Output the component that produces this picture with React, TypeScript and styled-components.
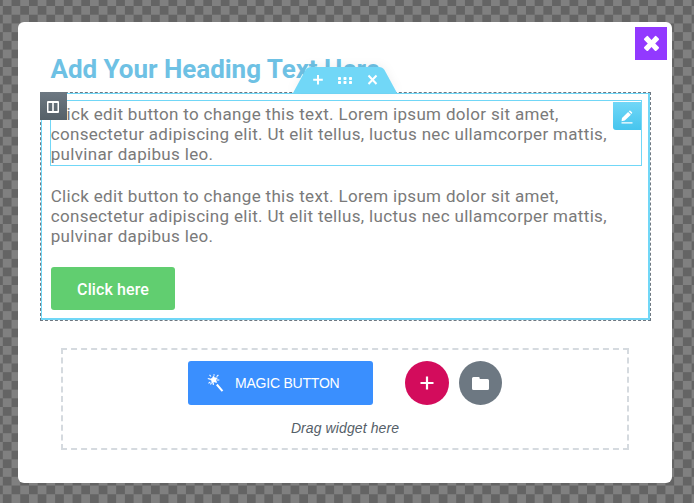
import React from "react";
import styled, { createGlobalStyle } from "styled-components";

const GlobalStyle = createGlobalStyle`
  *, *::before, *::after { box-sizing: border-box; }
  html, body { margin: 0; overflow: hidden; }
`;

const Backdrop = styled.main`
  width: 694px;
  height: 503px;
  padding: 22px 22px 20px 18px;
  background: repeating-conic-gradient(#808080 0 25%, #646464 0 50%) -5.92px -2.72px / 17.44px 17.44px;
  font-family: Roboto, "Liberation Sans", sans-serif;
`;

const Popup = styled.section`
  position: relative;
  height: 461px;
  padding: 29px 21px 0 22px;
  background: #fff;
  border-radius: 6px;
`;

const Heading = styled.h1`
  margin: 0 0 0 10.5px;
  height: 41px;
  color: #6ec1e4;
  font-size: 26px;
  font-weight: 700;
  line-height: 36px;
  letter-spacing: -0.03px;
  white-space: nowrap;
`;

const CloseButton = styled.button`
  position: absolute;
  top: 5px;
  right: 5px;
  display: grid;
  place-items: center;
  width: 32px;
  height: 33px;
  padding: 0;
  border: 0;
  background: #9239ff;
`;

const EditorSection = styled.div`
  position: relative;
  width: 611px;
  height: 229px;
  border: 1px dashed #6d7882;
`;

const Column = styled.div`
  height: 227px;
  padding: 6px 6px 0 8px;
  border: solid #71d7f7;
  border-width: 1px 2px 2px 1px;
`;

const TextWidget = styled.div<{ $active?: boolean }>`
  position: relative;
  width: 592px;
  height: 66px;
  padding-top: 3px;
  border: 1px solid ${(p) => (p.$active ? "#71d7f7" : "transparent")};
  margin-bottom: 16px;
`;

const Copy = styled.p`
  margin: 0 0 0 -0.3px;
  color: #7a7a7a;
  font-size: 17px;
  line-height: 20px;
  letter-spacing: 0.325px;
  white-space: nowrap;
`;

const EditHandle = styled.button`
  position: absolute;
  top: 1px;
  right: 0;
  display: grid;
  place-items: center;
  width: 28px;
  height: 28px;
  padding: 2px 0 0;
  border: 0;
  border-radius: 0 0 0 3px;
  background: linear-gradient(#71d7f7, #46c5ee);
`;

const ColumnHandle = styled.div`
  position: absolute;
  top: -1px;
  left: -1px;
  display: flex;
  align-items: center;
  width: 27px;
  height: 28px;
  padding: 1px 0 0 7px;
  background: linear-gradient(#6d7882, #556068);
`;

const SectionTab = styled.div`
  position: absolute;
  left: 252px;
  bottom: 227px;
  width: 104px;
  height: 26px;
  filter: drop-shadow(0 -2px 4px rgba(0, 0, 0, 0.05));
  svg { display: block; }
`;

const ActionButton = styled.button`
  display: block;
  width: 124px;
  height: 43px;
  margin: 19px 0 0 1px;
  padding: 2px 0 0;
  border: 0;
  border-radius: 3px;
  background: #61ce70;
  color: #fff;
  font: 500 16px/41px Roboto, sans-serif;
  letter-spacing: 0.1px;
`;

const DropArea = styled.div`
  display: flex;
  flex-direction: column;
  align-items: center;
  width: 568px;
  height: 102px;
  margin: 27px 0 0 21px;
  padding-top: 11px;
  border: 2px dashed #d5dadf;
`;

const DropActions = styled.div`
  display: flex;
  align-items: center;
  height: 44px;
`;

const MagicButton = styled.button`
  display: flex;
  align-items: center;
  gap: 10px;
  width: 185px;
  height: 44px;
  margin-right: 32px;
  padding: 0 0 0 19px;
  border: 0;
  border-radius: 3px;
  background: #3a8ffe;
  color: #fff;
  font: 14px "Liberation Sans", sans-serif;
  letter-spacing: -0.22px;
  white-space: nowrap;
`;

const RoundButton = styled.button<{ $tone: string; $width?: number; $gap?: number }>`
  display: grid;
  place-items: center;
  width: ${(p) => p.$width ?? 44}px;
  height: 44px;
  margin-left: ${(p) => p.$gap ?? 0}px;
  padding: 0;
  border: 0;
  border-radius: 50%;
  background: ${(p) => p.$tone};
`;

const Hint = styled.p`
  margin: 14px 0 0;
  color: #556068;
  font: italic 14px/18px "Liberation Sans", sans-serif;
  letter-spacing: 0.1px;
`;

const LOREM = [
  "Click edit button to change this text. Lorem ipsum dolor sit amet,",
  "consectetur adipiscing elit. Ut elit tellus, luctus nec ullamcorper mattis,",
  "pulvinar dapibus leo.",
];

const Paragraph = () => (
  <Copy>
    {LOREM.map((line, i) => (
      <React.Fragment key={line}>
        {i > 0 && <br />}
        {line}
      </React.Fragment>
    ))}
  </Copy>
);

const CloseIcon = () => (
  <svg width="17" height="17" viewBox="0 0 16 16">
    <path
      d="M8 4.600L11.200 1.100q.7-.7 1.400 0l2.200 2.200q.7.7 0 1.400L11.500 8l3.300 3.200q.7.7 0 1.400l-2.200 2.200q-.7.7-1.400 0L8 11.400l-3.200 3.400q-.7.7-1.400 0l-2.200-2.200q-.7-.7 0-1.400L4.500 8 1.200 4.700q-.7-.7 0-1.400l2.200-2.200q.7-.7 1.400 0z"
      fill="#fff"
    />
  </svg>
);

const ColumnIcon = () => (
  <svg width="12" height="12" viewBox="0 0 12 12" fill="#fff" fillRule="evenodd">
    <path d="M1 0h10a1 1 0 0 1 1 1v10a1 1 0 0 1-1 1H1a1 1 0 0 1-1-1V1a1 1 0 0 1 1-1zM1.500 2v8h3.700V2zM6.800 2v8h3.700V2z" />
  </svg>
);

const PencilIcon = () => (
  <svg width="12" height="14" viewBox="0 0 12 14" fill="#fff">
    <path d="M1 8L7.100 1.900 9.900 4.700 3.800 10.500.5 11.200zM7.800 1.300l.6-.6q.5-.5 1 0l1.600 1.600q.5.500 0 1l-.6.7zM.5 12.200h11v1.300H.5z" />
  </svg>
);

const WandIcon = () => (
  <svg width="18" height="20" viewBox="0 0 18 20" fill="none" stroke="#fff">
    <path d="M9.800 11.500l5.700 6.700" strokeWidth="2" />
    <path d="M6.500 3l1.200 1.800 2.600.1-1.400 2.100.8 2.600-2.500-.7-2.300 1.400-.2-2.600L2.800 6.200l2.400-.9z" fill="#fff" stroke="#fff" strokeWidth=".6" />
    <path d="M7 1.200v1.500M2.500 1.800L4 3.500M9.600 3.600L11.400 2M.8 5.500l2.200.6M10 7h2.300M1.500 10.300l1.800-1.500M6.300 10v2M3.500 11.500l.8-1.500" strokeWidth="1.100" />
  </svg>
);

const PlusIcon = () => (
  <svg width="14" height="14" viewBox="0 0 14 14">
    <path d="M7 .5v13M.5 7h13" stroke="#fff" strokeWidth="2.200" />
  </svg>
);

const FolderIcon = () => (
  <svg width="17" height="13" viewBox="0 0 17 13">
    <path d="M1.500 0h5q1.200 0 1.200 1.200V2H15.500Q17 2 17 3.500v8q0 1.500-1.500 1.500h-14Q0 13 0 11.500v-10Q0 0 1.500 0z" fill="#fff" />
  </svg>
);

const TabShape = () => (
  <svg width="104" height="26" viewBox="0 0 104 26">
    <path d="M0 26L12.500 3Q14.500 0 18 0H86Q89.500 0 91.500 3L104 26z" fill="#71d7f7" />
    <path d="M25 8v9.500M20.200 12.700h9.600M75.500 8.500l8 8.500M83.500 8.500l-8 8.500" stroke="#fff" strokeWidth="2" />
    <g fill="#fff">
      {[45, 50.500, 56].map((x) => (
        <React.Fragment key={x}>
          <rect x={x} y="10" width="3" height="3" rx=".8" />
          <rect x={x} y="14" width="3" height="3" rx=".8" />
        </React.Fragment>
      ))}
    </g>
  </svg>
);

export default function App() {
  return (
    <>
      <GlobalStyle />
      <Backdrop>
        <Popup>
          <Heading>Add Your Heading Text Here</Heading>
          <EditorSection>
            <Column>
              <TextWidget $active>
                <Paragraph />
                <EditHandle aria-label="Edit text"><PencilIcon /></EditHandle>
              </TextWidget>
              <TextWidget>
                <Paragraph />
              </TextWidget>
              <ActionButton>Click here</ActionButton>
            </Column>
            <SectionTab><TabShape /></SectionTab>
            <ColumnHandle><ColumnIcon /></ColumnHandle>
          </EditorSection>
          <DropArea>
            <DropActions>
              <MagicButton><WandIcon />MAGIC BUTTON</MagicButton>
              <RoundButton $tone="#d30c5c" aria-label="Add section"><PlusIcon /></RoundButton>
              <RoundButton $tone="#6d7882" $width={43} $gap={10} aria-label="Add template"><FolderIcon /></RoundButton>
            </DropActions>
            <Hint>Drag widget here</Hint>
          </DropArea>
          <CloseButton aria-label="Close"><CloseIcon /></CloseButton>
        </Popup>
      </Backdrop>
    </>
  );
}
